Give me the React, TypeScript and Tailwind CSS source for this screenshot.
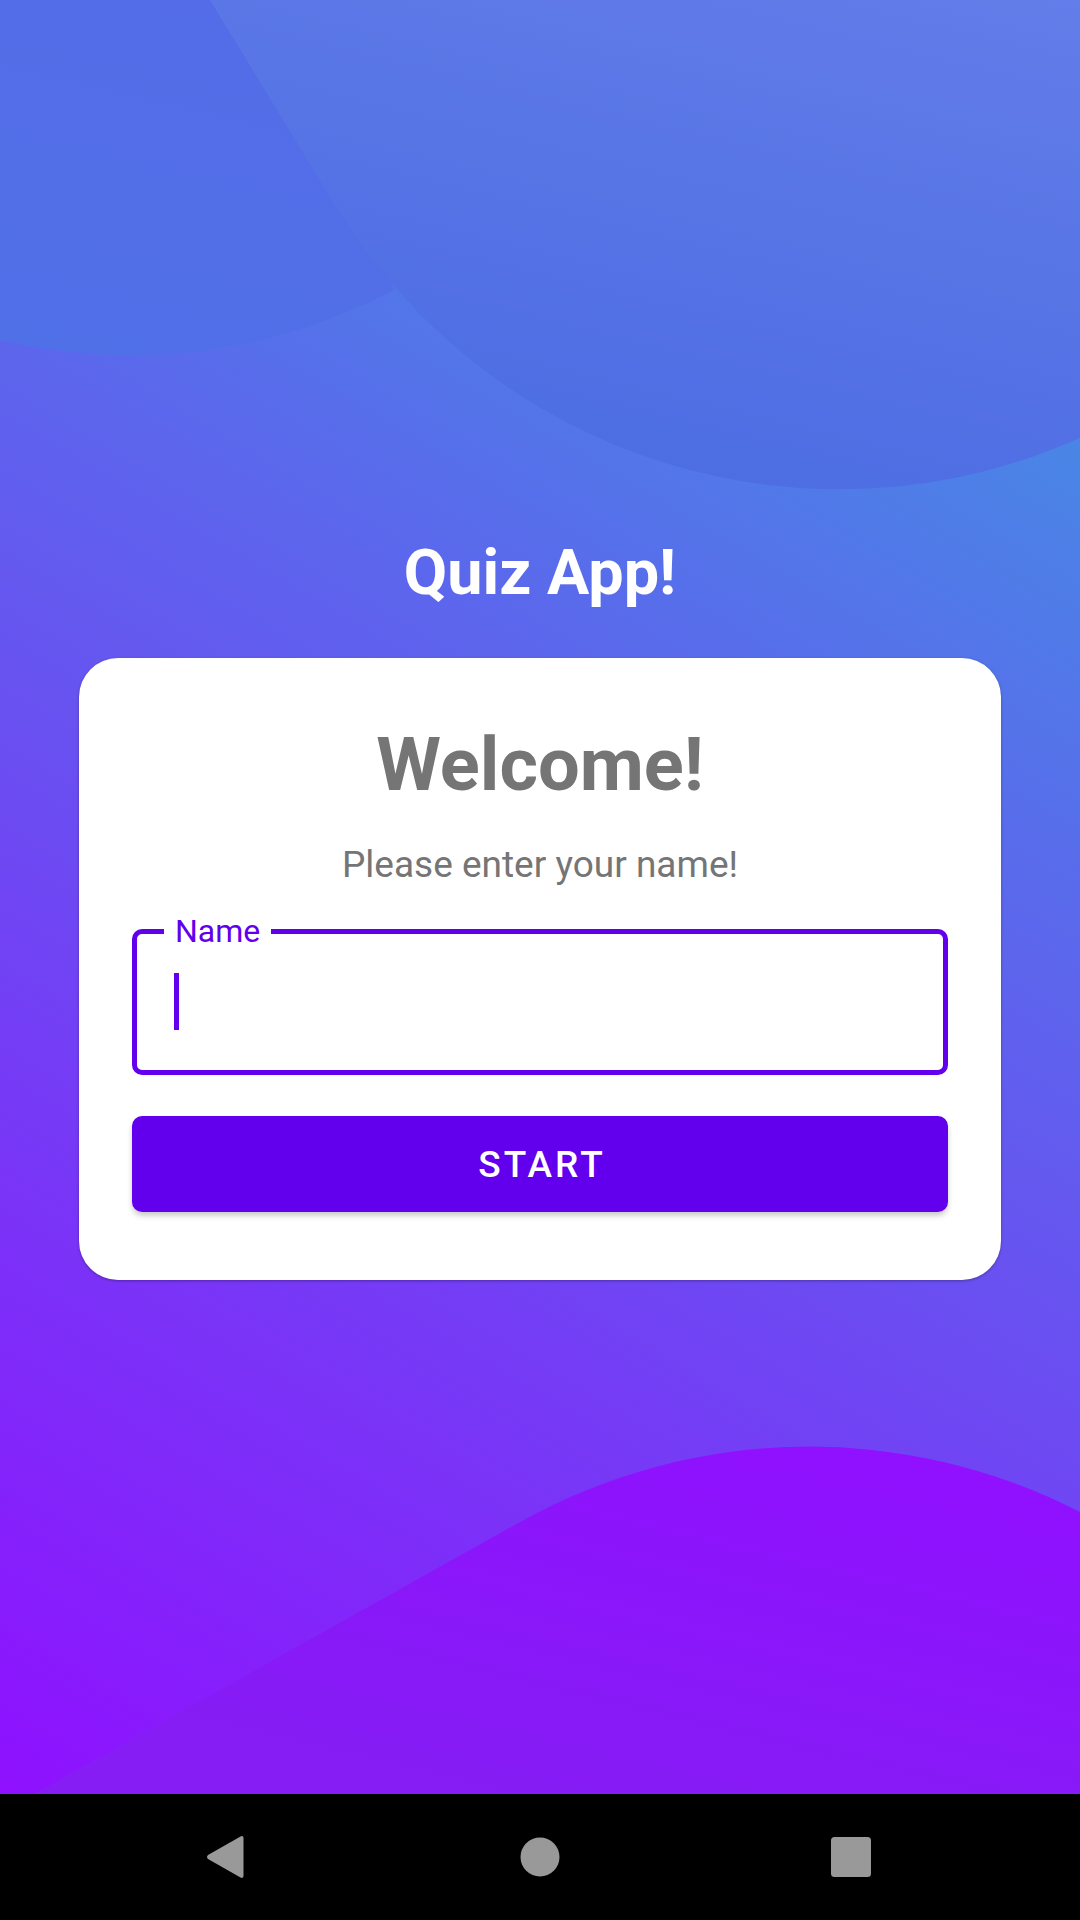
import { useState } from "react";

function Backdrop() {
  return (
    <svg
      className="absolute inset-0 h-full w-full"
      viewBox="0 0 1080 1794"
      preserveAspectRatio="none"
      aria-hidden="true"
    >
      <defs>
        <linearGradient id="base" gradientUnits="userSpaceOnUse" x1="0" y1="1794" x2="890" y2="290">
          <stop offset="0" stopColor="#8f10ff" />
          <stop offset="1" stopColor="#4888e5" />
        </linearGradient>
        <linearGradient id="topLeft" gradientUnits="userSpaceOnUse" x1="200" y1="0" x2="120" y2="355">
          <stop offset="0" stopColor="#546ce7" />
          <stop offset="1" stopColor="#5070e8" />
        </linearGradient>
        <linearGradient id="topRight" gradientUnits="userSpaceOnUse" x1="1080" y1="0" x2="950" y2="540">
          <stop offset="0" stopColor="#637de9" />
          <stop offset="1" stopColor="#4d6de3" />
        </linearGradient>
        <linearGradient id="bottom" gradientUnits="userSpaceOnUse" x1="880" y1="1450" x2="780" y2="1870">
          <stop offset="0" stopColor="#9010ff" />
          <stop offset="1" stopColor="#851df4" />
        </linearGradient>
      </defs>
      <rect width="1080" height="1794" fill="url(#base)" />
      <path d="M0 0H300L394 290A568 568 0 0 1 0 340Z" fill="url(#topLeft)" />
      <path d="M210 0L336 207A590 590 0 0 0 1080 438V0Z" fill="url(#topRight)" />
      <path d="M34 1794L520 1522A593 593 0 0 1 1080 1512V1794Z" fill="url(#bottom)" />
    </svg>
  );
}

function NavigationBar() {
  const button = "flex flex-1 items-center justify-center";
  return (
    <nav className="flex h-[126px] bg-black px-[73px]" aria-label="System">
      <button type="button" className={button} aria-label="Back">
        <svg className="h-12 w-12" viewBox="0 0 48 48" fill="#999999">
          <path d="M3 22 L35.500 3.400 Q38.500 2.200 38.500 5.200 V42.800 Q38.500 45.800 35.500 44.600 L3 26 Q1 24 3 22Z" />
        </svg>
      </button>
      <button type="button" className={button} aria-label="Home">
        <svg className="h-12 w-12" viewBox="0 0 48 48" fill="#999999">
          <circle cx="24" cy="24" r="19.500" />
        </svg>
      </button>
      <button type="button" className={button} aria-label="Recent apps">
        <svg className="h-12 w-12" viewBox="0 0 48 48" fill="#999999">
          <rect x="4" y="4" width="40" height="40" rx="3.500" />
        </svg>
      </button>
    </nav>
  );
}

export default function App() {
  const [name, setName] = useState("");

  return (
    <div className="flex min-h-screen flex-col font-[Roboto,sans-serif]">
      <main className="relative flex flex-1 flex-col items-stretch justify-center px-[79px] pt-[22px]">
        <Backdrop />
        <h1 className="relative text-center text-[63px] leading-[74px] font-bold text-white">Quiz App!</h1>
        <form
          className="relative mt-12 flex flex-col rounded-[39px] bg-white px-[53px] pt-[63px] pb-[68px] shadow-[0_1px_3px_rgba(0,0,0,0.3)]"
          onSubmit={(event) => event.preventDefault()}
        >
          <h2 className="text-center text-[74px] leading-[87px] font-bold text-[#757575]">Welcome!</h2>
          <p className="mt-[35px] text-center text-[37px] leading-[43px] text-[#757575]">Please enter your name!</p>
          <fieldset className="mt-[27px] min-w-0 rounded-[10px] border-5 border-[#6200ee]">
            <legend className="ml-[27px] px-[11px] text-[32px] leading-[36px] text-[#6200ee]">
              <label htmlFor="name">Name</label>
            </legend>
            <div className="relative mx-[37px] mt-6 mb-10 h-[57px]">
              <input
                id="name"
                type="text"
                value={name}
                onChange={(event) => setName(event.target.value)}
                className="h-full w-full bg-transparent text-[42px] text-black caret-transparent outline-none"
              />
              {name === "" && <span className="pointer-events-none absolute inset-y-0 left-0 w-[5px] bg-[#6200ee]" />}
            </div>
          </fieldset>
          <button
            type="submit"
            className="mt-[41px] h-24 rounded-[10px] bg-[#6200ee] pt-0.5 pl-1 text-[37px] font-medium tracking-[3px] text-white shadow-[0_4px_6px_-1px_rgba(0,0,0,0.25)]"
          >
            START
          </button>
        </form>
      </main>
      <NavigationBar />
    </div>
  );
}
